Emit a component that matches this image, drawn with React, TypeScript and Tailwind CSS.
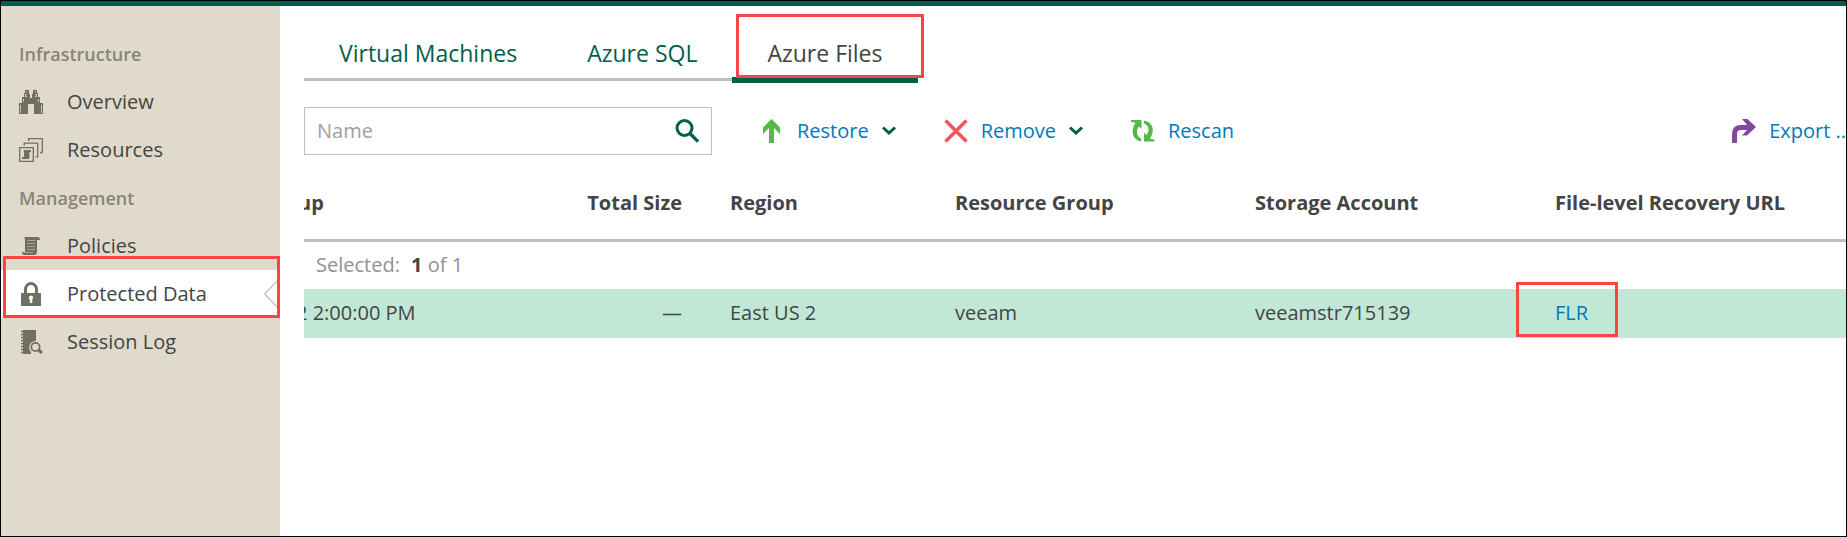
import type { ReactNode } from "react";

const INK = "#736e64";

function BinocularsIcon() {
  return (
    <svg width="24" height="24" viewBox="0 0 24 24" aria-hidden="true">
      <path
        fill={INK}
        d="M6 0h4v4h1v4h2V4h1V0h4v3h1v4h2v6h3v11h-9V14H9v10H0V13h3V7h2V3h1z"
      />
      <g fill="#e0dacc" opacity="0.8">
        <path d="M7 1h1v1H7zM16 1h1v1h-1zM6 4h2v3H6zM16 4h2v3h-2zM4 9h1v3H4zM19 9h1v3h-1zM1 15h1v8H1zM22 15h1v8h-1z" />
      </g>
      <path fill={INK} d="M7 5h1v1H7zM16 5h1v1h-1z" />
    </svg>
  );
}

function ResourcesIcon() {
  return (
    <svg width="24" height="24" viewBox="0 0 24 24" aria-hidden="true">
      <g fill="none" stroke={INK} strokeWidth="1.3">
        <path d="M9.6 3V.7h13.7v13.8H21" />
        <path d="M5.2 7.500V5.200h13.500v13.600h-2.300" />
        <path d="M.7 9.700h13.600v13.600H.7z" />
      </g>
      <path fill={INK} d="M4 12h8v2h-1.500v5.500q0 1.500-1.500 1.500H3v-2h2v-5q0-2-1-2z" />
    </svg>
  );
}

function PoliciesIcon() {
  return (
    <svg width="24" height="24" viewBox="0 0 24 24" aria-hidden="true">
      <path
        fill={INK}
        d="M5 3h14q2 0 2 3h-3v12q0 3-3 3H5q-2 0-2-3h3V6q0-2-1-3z"
      />
      <path
        fill="none"
        stroke="#e0dacc"
        strokeWidth="1"
        opacity="0.5"
        d="M8 6.500h8M8 9.500h8M8 12.500h8M8 15.500h8M5 18.500h9"
      />
    </svg>
  );
}

function LockIcon() {
  return (
    <svg width="24" height="24" viewBox="0 0 24 24" aria-hidden="true">
      <path
        fill="none"
        stroke={INK}
        strokeWidth="3"
        d="M6.500 12V7.500a5.500 6 0 0 1 11 0V12"
      />
      <path fill={INK} d="M2 11h20v13H2z" />
      <path fill="#fff" d="M12 13.500a2.200 2.200 0 0 1 1.200 4V21h-2.400v-3.500a2.200 2.200 0 0 1 1.200-4z" />
    </svg>
  );
}

function SessionIcon() {
  return (
    <svg width="24" height="24" viewBox="0 0 24 24" aria-hidden="true">
      <path fill={INK} d="M4 0h13v11a6.500 6.500 0 0 0-5 11v2H4z" />
      <path
        stroke={INK}
        strokeWidth="1.500"
        d="M2 1.500h3M2 4.500h3M2 7.500h3M2 10.500h3M2 13.500h3M2 16.500h3M2 19.500h3M2 22.500h3"
      />
      <circle cx="16.500" cy="17" r="4.200" fill="none" stroke={INK} strokeWidth="1.800" />
      <path stroke={INK} strokeWidth="3" d="m19.500 20 3.500 3" />
    </svg>
  );
}

function SearchIcon() {
  return (
    <svg width="24" height="24" viewBox="0 0 24 24" aria-hidden="true">
      <circle cx="9.500" cy="9" r="7.500" fill="none" stroke="#005f4b" strokeWidth="3" />
      <path stroke="#005f4b" strokeWidth="3.200" d="m15 14.500 8 8" />
    </svg>
  );
}

function Chevron() {
  return (
    <svg width="14" height="10" viewBox="0 0 14 10" aria-hidden="true">
      <path fill="none" stroke="#005f4b" strokeWidth="3" d="m1 1.500 6 5.500 6-5.500" />
    </svg>
  );
}

function RestoreIcon() {
  return (
    <svg width="24" height="24" viewBox="0 0 24 24" aria-hidden="true">
      <path fill="#54b948" d="M11.500 0l8.500 8.500v6.500l-6-6v15H9V9l-6 6V8.500z" />
    </svg>
  );
}

function RemoveIcon() {
  return (
    <svg width="24" height="24" viewBox="0 0 24 24" aria-hidden="true">
      <path stroke="#ee5859" strokeWidth="3.600" d="m1.500 1.500 21 21m0-21-21 21" />
    </svg>
  );
}

function RescanIcon() {
  return (
    <svg width="24" height="24" viewBox="0 0 24 24" aria-hidden="true">
      <g fill="#54b948">
        <path d="M0 1h10.500v9L8 7.500C5 11 5 17 10 19.500V22.500C1 20.500 -.5 11 4.500 4Q2.500 3 0 3z" />
        <path d="M23.500 22.500H13v-9l2.500 2.500C18.500 12.500 18.500 7 13 4.500V1.500C22.500 3 24 12.500 19 19.500q2 1 4.500 1z" />
      </g>
    </svg>
  );
}

function ExportIcon() {
  return (
    <svg width="24" height="24" viewBox="0 0 24 24" aria-hidden="true">
      <path
        fill="#824a9c"
        d="M10 0h5.500l8.500 8-9 8.500h-5l5-5.500h-6q-4 0-4 4v9H0v-9Q0 6 9 6h6z"
      />
    </svg>
  );
}

function NavHeading({ children }: { children: ReactNode }) {
  return (
    <h2 className="flex h-12 items-center pl-[18px] text-[18px] font-semibold text-[#898578]">
      {children}
    </h2>
  );
}

function NavItem({
  icon,
  label,
  active = false,
}: {
  icon: ReactNode;
  label: string;
  active?: boolean;
}) {
  return (
    <a
      href="#"
      aria-current={active ? "page" : undefined}
      className={
        active
          ? "relative flex h-12 items-center gap-6 bg-white pl-[18px]"
          : "flex h-12 items-center gap-6 pl-[18px]"
      }
    >
      {icon}
      <span>{label}</span>
      {active && (
        <>
          <svg
            className="absolute top-2.5 right-0"
            width="16"
            height="28"
            viewBox="0 0 16 28"
            aria-hidden="true"
          >
            <path fill="none" stroke="#bfbfbf" strokeWidth="1.300" d="M15 -1 .7 14 15 29" />
          </svg>
          <span className="pointer-events-none absolute -top-3.5 right-0 bottom-0 left-0.5 border-3 border-[#fd4444]" />
        </>
      )}
    </a>
  );
}

function Action({
  icon,
  label,
  menu = false,
}: {
  icon: ReactNode;
  label: string;
  menu?: boolean;
}) {
  return (
    <button type="button" className="flex shrink-0 items-center gap-[13px] text-[#0079b8]">
      {icon}
      <span className="whitespace-nowrap">{label}</span>
      {menu && <Chevron />}
    </button>
  );
}

export default function App() {
  return (
    <div className="flex min-h-screen flex-col border border-black bg-white font-['Open_Sans',sans-serif] text-[20px] leading-7 text-[#444]">
      <div className="h-[5px] bg-[#005f4b]" />
      <div className="flex grow">
        <nav className="w-[279px] shrink-0 bg-[#e0dacc] pt-6">
          <NavHeading>Infrastructure</NavHeading>
          <NavItem icon={<BinocularsIcon />} label="Overview" />
          <NavItem icon={<ResourcesIcon />} label="Resources" />
          <NavHeading>Management</NavHeading>
          <NavItem icon={<PoliciesIcon />} label="Policies" />
          <NavItem icon={<LockIcon />} label="Protected Data" active />
          <NavItem icon={<SessionIcon />} label="Session Log" />
        </nav>

        <main className="min-w-0 grow pl-6">
          <div className="flex items-end pt-4 text-[23px]">
            <div className="mb-0.5 flex h-[59px] border-b-3 border-[#bfbfbf]">
              <button type="button" className="px-[35px] pt-1.5 text-[#005f4b]">
                Virtual Machines
              </button>
              <button type="button" className="px-[35px] pt-1.5 text-[#005f4b]">
                Azure SQL
              </button>
            </div>
            <button
              type="button"
              aria-pressed="true"
              className="relative h-[61px] border-b-6 border-[#005f4b] px-[35px] pt-1.5"
            >
              Azure Files
              <span className="pointer-events-none absolute -top-2 -right-1.5 -bottom-px left-1 border-3 border-[#fd4444]" />
            </button>
          </div>

          <div className="mt-6 flex h-12 items-center overflow-hidden">
            <label className="flex h-12 w-[408px] shrink-0 items-center border border-[#bfbfbf] px-3">
              <input
                type="text"
                aria-label="Name"
                placeholder="Name"
                className="min-w-0 grow outline-none placeholder:text-[#a0a0a0]"
              />
              <SearchIcon />
            </label>
            <div className="ml-12 flex shrink-0 gap-12">
              <Action icon={<RestoreIcon />} label="Restore" menu />
              <Action icon={<RemoveIcon />} label="Remove" menu />
              <Action icon={<RescanIcon />} label="Rescan" />
            </div>
            <div className="ml-auto shrink-0">
              <Action icon={<ExportIcon />} label="Export .." />
            </div>
          </div>

          <div className="overflow-hidden">
            <table className="-ml-3 w-[calc(100%+12px)] table-fixed border-collapse text-left">
              <colgroup>
                <col className="w-[240px]" />
                <col className="w-[174px]" />
                <col className="w-[225px]" />
                <col className="w-[300px]" />
                <col className="w-[300px]" />
                <col />
              </colgroup>
              <thead>
                <tr className="h-[85px] border-b-3 border-[#bfbfbf] whitespace-nowrap">
                  <th className="pt-3 pl-1.5 font-bold">up</th>
                  <th className="pt-3 pr-6 text-right font-bold">Total Size</th>
                  <th className="pt-3 pl-6 font-bold">Region</th>
                  <th className="pt-3 pl-6 font-bold">Resource Group</th>
                  <th className="pt-3 pl-6 font-bold">Storage Account</th>
                  <th className="pt-3 pl-6 font-bold">File-level Recovery URL</th>
                </tr>
              </thead>
              <tbody>
                <tr className="h-[49px]">
                  <td colSpan={6} className="pl-6 text-[#929292]">
                    Selected: <b className="ml-1.5 text-[#444]">1</b> of 1
                  </td>
                </tr>
                <tr className="h-12 border-y border-[#d9dcda] bg-[#c1e8d7] whitespace-nowrap">
                  <td className="pl-1">2 2:00:00 PM</td>
                  <td className="pr-6 text-right">—</td>
                  <td className="pl-6">East US 2</td>
                  <td className="pl-6">veeam</td>
                  <td className="pl-6">veeamstr715139</td>
                  <td className="relative pl-6">
                    <a href="#" className="text-[#0079b8]">
                      FLR
                    </a>
                    <span className="pointer-events-none absolute -top-2 bottom-0 -left-[15px] w-[102px] border-3 border-[#fd4444]" />
                  </td>
                </tr>
              </tbody>
            </table>
          </div>
        </main>
      </div>
    </div>
  );
}
